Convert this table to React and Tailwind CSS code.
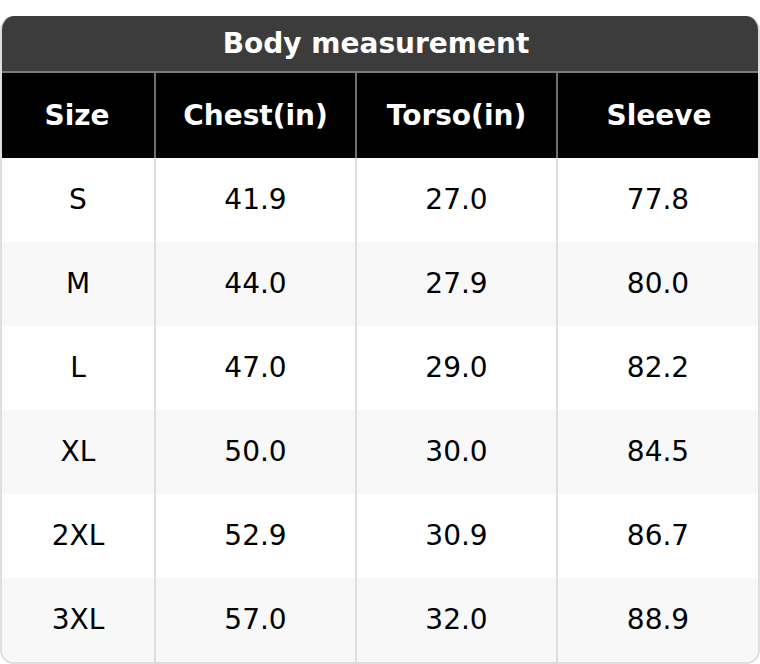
import React from "react";

const rows = [
  ["S", "41.9", "27.0", "77.8"],
  ["M", "44.0", "27.9", "80.0"],
  ["L", "47.0", "29.0", "82.2"],
  ["XL", "50.0", "30.0", "84.5"],
  ["2XL", "52.9", "30.9", "86.7"],
  ["3XL", "57.0", "32.0", "88.9"],
];

export default function App() {
  return (
    <div className="w-[760px] h-[664px] bg-white pt-[16px]" style={{ fontFamily: '"DejaVu Sans", sans-serif' }}>
      <div className="rounded-[14px] overflow-hidden border-2 border-t-0 border-[#dedede]">
        <div className="h-[57px] bg-[#3c3c3c] flex items-center justify-center pr-[8px] text-white font-bold text-[28px] border-b-2 border-[#7a7a7a] -mx-[2px]">
          Body measurement
        </div>
        <div className="grid grid-cols-[154px_201px_201px_1fr] bg-black text-white font-bold text-[28px] h-[85px] -mx-[2px]">
          {["Size", "Chest(in)", "Torso(in)", "Sleeve"].map((h, i) => (
            <div key={h} className={`flex items-center justify-center ${i > 0 ? "border-l-2 border-[#6f6f6f]" : ""}`}>
              {h}
            </div>
          ))}
        </div>
        {rows.map((r, ri) => (
          <div key={ri} className={`grid grid-cols-[152px_201px_201px_1fr] h-[84px] text-[28px] text-black ${ri % 2 === 1 ? "bg-[#f8f8f8]" : "bg-white"}`}>
            {r.map((c, ci) => (
              <div key={ci} className={`flex items-center justify-center ${ci > 0 ? "border-l-2 border-[#dedede]" : ""}`}>
                {c}
              </div>
            ))}
          </div>
        ))}
      </div>
    </div>
  );
}
